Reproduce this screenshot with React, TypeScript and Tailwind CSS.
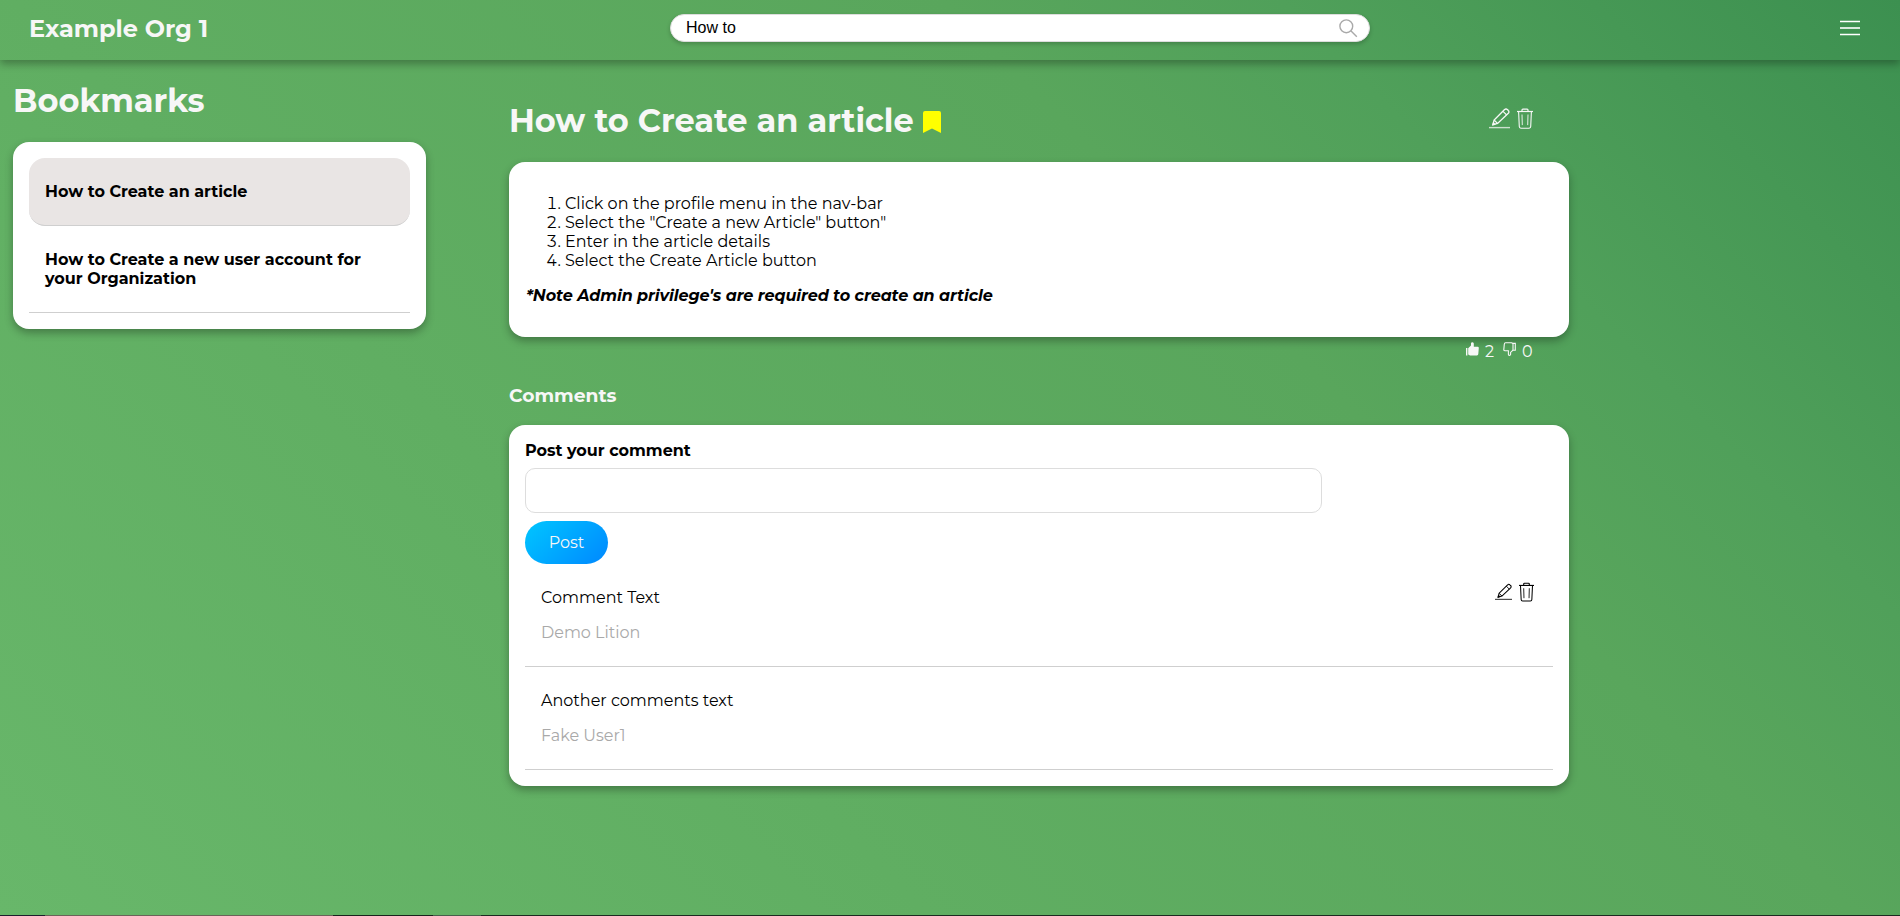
import React from "react";

function PencilIcon({ className }: { className?: string }) {
  return (
    <svg viewBox="0 0 21 21" className={className} fill="none" stroke="currentColor">
      <path d="M0 19.6h21" strokeWidth="1.4" opacity=".75" />
      <path d="M4 16.6l1.1-4.6L15.6 1.6a1.9 1.9 0 0 1 2.8 0l.9.9a1.9 1.9 0 0 1 0 2.8L8.6 15.5z" strokeWidth="1.35" />
      <path d="M5.1 12l3.5 3.5M14 3.3l3.7 3.7" strokeWidth="1.1" />
      <path d="M3.5 17.2l.8-2.8 2 2z" fill="currentColor" strokeWidth=".8" />
    </svg>
  );
}

function TrashIcon({ className }: { className?: string }) {
  return (
    <svg viewBox="0 0 16 21" className={className} fill="none" stroke="currentColor">
      <path d="M0 3.5h16" strokeWidth="1.2" />
      <path d="M5 3.3V2a.9.9 0 0 1 .9-.9h4.2a.9.9 0 0 1 .9.9v1.3" strokeWidth="1.2" />
      <path d="M1.6 3.6l.7 15a1.6 1.6 0 0 0 1.6 1.6h8.2a1.6 1.6 0 0 0 1.6-1.6l.7-15" strokeWidth="1.1" />
      <path d="M5 6.5l.3 10.6M11 6.5l-.3 10.6" strokeWidth=".9" />
    </svg>
  );
}

function ThumbUp({ className }: { className?: string }) {
  return (
    <svg viewBox="0 0 13 14" className={className} fill="currentColor">
      <path d="M0 6h1.4v7.4H0z" />
      <path d="M2.2 6.2L5 3.5V1.3Q5.2.3 6.3.3T7.8 1.5V4.7H11.6Q12.9 4.7 12.8 6L12.3 12Q12.2 13.4 10.9 13.4H4L2.2 12.6z" />
    </svg>
  );
}

function ThumbDown({ className }: { className?: string }) {
  return (
    <svg viewBox="0 0 13 14" className={className} fill="none" stroke="currentColor" strokeWidth="1.1">
      <path d="M10 1.4h2.3v6.9H10z" />
      <path d="M10 8.2L7.6 10.4V12.5Q7.4 13.4 6.5 13.4T5.4 12.3V8.7H1.9Q.7 8.7.8 7.5L1.3 2.2Q1.4.8 2.6.8H8.5L10 1.5" />
    </svg>
  );
}

function Comment({ text, author, own }: { text: string; author: string; own?: boolean }) {
  return (
    <div className="flex h-[103px] items-start justify-between border-b border-[#cfcfcf] pl-4 pr-[19px]">
      <div className="pt-6 leading-[19px]">
        <p>{text}</p>
        <p className="mt-4 text-[#a9a9a9]">{author}</p>
      </div>
      {own && (
        <div className="flex gap-[7px] pt-[18px] text-black">
          <PencilIcon className="mt-px h-[18px] w-[17px]" />
          <TrashIcon className="h-[20px] w-[15px]" />
        </div>
      )}
    </div>
  );
}

const steps = [
  "Click on the profile menu in the nav-bar",
  'Select the "Create a new Article" button"',
  "Enter in the article details",
  "Select the Create Article button",
];

export default function App() {
  return (
    <div className="flex h-[916px] w-[1900px] flex-col overflow-hidden bg-[linear-gradient(45deg,#68b76a_0%,#60ae62_33%,#59a65c_66%,#50a05a_78%,#3c9050_100%)] font-[Montserrat,Inter,sans-serif] text-base text-black">
      <header className="flex h-[60px] shrink-0 items-center shadow-[0_4px_8px_0_rgba(0,0,0,0.3)]">
        <div className="w-[670px] pb-[3px] pl-[29px] text-2xl font-bold leading-[29px] text-[#f7f7f7]">Example Org 1</div>
        <div className="mb-1 flex h-7 w-[700px] items-center justify-between rounded-full border border-[#ddd] bg-white pl-[15px] pr-[11px] shadow-[0_2px_4px_rgba(0,0,0,0.2)]">
          <span className="pb-px font-['Liberation_Sans',Arial,sans-serif] leading-[18px]">How to</span>
          <svg viewBox="0 0 19 19" className="h-[19px] w-[19px]" fill="none" stroke="#a9a9a9" strokeWidth="1.4">
            <circle cx="7.3" cy="7.3" r="6.4" />
            <path d="M11.8 11.8l6 6" />
          </svg>
        </div>
        <svg viewBox="0 0 22 16" className="mb-1 ml-[469px] h-4 w-[22px]" stroke="#fff">
          <path d="M1 1.5h20M1 14.5h20" strokeWidth="1.6" />
          <path d="M1 8h20" strokeWidth="2" opacity=".8" />
        </svg>
      </header>

      <div className="flex min-h-0 flex-1">
        <aside className="ml-[13px] w-[413px] shrink-0 pt-[21px]">
          <h1 className="text-[32px] font-bold leading-[39px] text-[#f7f7f7]">Bookmarks</h1>
          <div className="mt-[22px] h-[187px] rounded-2xl bg-white p-4 font-bold leading-[19px] shadow-[0_4px_8px_rgba(0,0,0,0.3)]">
            <div className="h-[68px] rounded-2xl border-b border-[#cfcfcf] bg-[#e9e5e4] px-4 pt-6">How to Create an article</div>
            <div className="h-[87px] border-b border-[#cfcfcf] px-4 pt-6">How to Create a new user account for your Organization</div>
          </div>
        </aside>

        <main className="ml-[83px] w-[1060px] shrink-0 pt-[41px]">
          <div className="flex h-[39px] items-start">
            <h1 className="text-[32px] font-bold leading-[39px] text-[#f7f7f7]">How to Create an article</h1>
            <svg viewBox="0 0 18 22" className="ml-[9px] mt-[10px] h-[22px] w-[18px]" fill="#ff0">
              <path d="M2 0h14a2 2 0 0 1 2 2v20l-9-4.5L0 22V2a2 2 0 0 1 2-2z" />
            </svg>
            <div className="ml-auto mr-9 mt-[7px] flex gap-[7px] text-[#f7f7f7]">
              <PencilIcon className="h-[21px] w-[21px]" />
              <TrashIcon className="h-[21px] w-4" />
            </div>
          </div>

          <section className="mt-[22px] h-[175px] rounded-2xl bg-white px-4 pt-8 leading-[19px] shadow-[0_4px_8px_rgba(0,0,0,0.3)]">
            <ol className="list-decimal pl-10">
              {steps.map((s) => (
                <li key={s}>{s}</li>
              ))}
            </ol>
            <p className="mt-4 pl-px font-bold italic tracking-[-0.08px]">*Note Admin privilege's are required to create an article</p>
          </section>

          <div className="flex h-[26px] items-start justify-end pr-9 pt-[5px] leading-[19px] text-[#f7f7f7]">
            <ThumbUp className="h-[14px] w-[13px]" />
            <span className="ml-[6px] w-[18px]">2</span>
            <ThumbDown className="h-[14px] w-[13px]" />
            <span className="ml-[6px] w-[11px]">0</span>
          </div>

          <h3 className="mt-[21px] text-[18.72px] font-bold leading-[23px] text-[#f7f7f7]">Comments</h3>

          <section className="mt-[18px] h-[361px] rounded-2xl bg-white px-4 pt-4 shadow-[0_4px_8px_rgba(0,0,0,0.3)]">
            <div className="font-bold leading-[19px]">Post your comment</div>
            <div className="mt-2 h-[45px] w-[797px] rounded-[10px] border border-[#ddd]" />
            <button className="mt-2 block h-[43px] w-[83px] rounded-full bg-[linear-gradient(135deg,#00c6ff,#0088ff)] text-[#f7f7f7]">
              Post
            </button>
            <Comment text="Comment Text" author="Demo Lition" own />
            <Comment text="Another comments text" author="Fake User1" />
          </section>
        </main>
      </div>

      <div className="flex h-px shrink-0 bg-[#1c2a20]">
        <div className="w-[45px] bg-[#1e1e2c]" />
        <div className="w-[288px] bg-[#6b6358]" />
        <div className="w-[100px] bg-[#1a221c]" />
        <div className="w-[48px] bg-[#46604a]" />
      </div>
    </div>
  );
}
